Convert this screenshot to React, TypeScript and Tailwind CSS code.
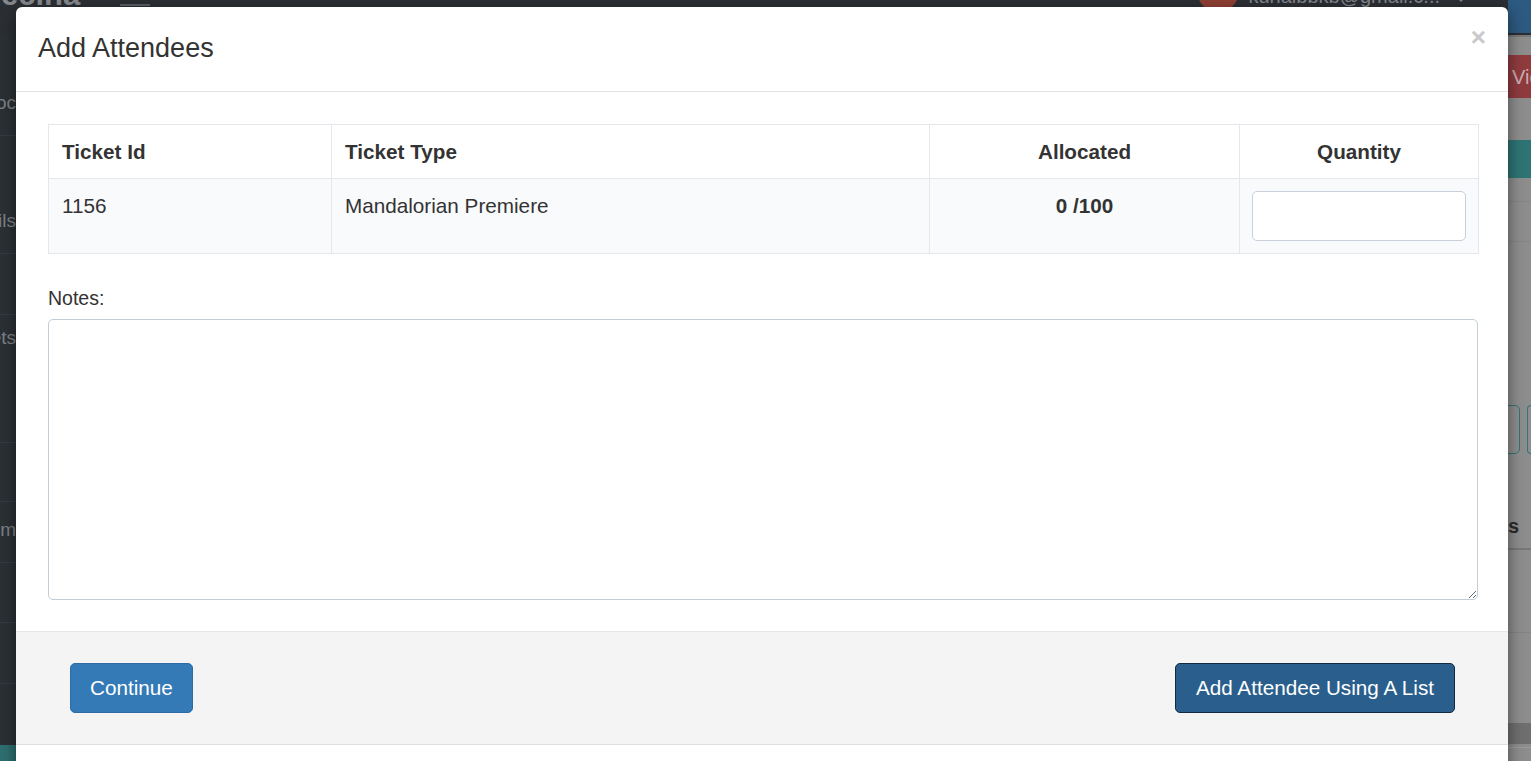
const sideRows = [
  { h: 'h-[101px]', label: 'Doc', border: true },
  { h: 'h-[60px]', label: '', border: false },
  { h: 'h-[58px]', label: 'Details', border: true },
  { h: 'h-[61px]', label: '', border: true },
  { h: 'h-[55px]', label: 'Tickets', border: false },
  { h: 'h-[73px]', label: '', border: true },
  { h: 'h-[59px]', label: '', border: true },
  { h: 'h-[61px]', label: 'Form', border: true },
  { h: 'h-[60px]', label: '', border: true },
  { h: 'h-[61px]', label: '', border: true },
  { h: 'h-[61px]', label: '', border: false },
]

function Backdrop() {
  return (
    <div className="absolute inset-0 flex flex-col bg-[#8d8d8d]">
      {/* navbar, dimmed by the modal backdrop */}
      <div className="h-[35px] shrink-0 flex items-start bg-[#2b2f34]">
        <div className="w-[120px] shrink-0 overflow-hidden">
          <span className="block -ml-[18px] -mt-[23px] whitespace-nowrap text-[31px] font-bold leading-[36px] text-[#85888c]">
            Vecina
          </span>
        </div>
        <div className="mt-[4px] w-[30px] h-[2px] bg-[#5b5f65]" />
        <div className="flex-1" />
        <div className="-mt-[30px] mr-[9px] w-[42px] h-[42px] rounded-full bg-[#8e3f33]" />
        <span className="-mt-[16px] text-[20px] leading-[24px] text-[#80848a]">kunalbbkb@gmail.c...</span>
        <svg className="-mt-[4px] ml-[14px] mr-[40px]" width="14" height="8" viewBox="0 0 14 8">
          <path d="M1 0 L7 6 L13 0 Z" fill="#80848a" />
        </svg>
        <div className="w-[23px] h-[33px] bg-[#2c5a80]" />
      </div>

      <div className="flex-1 flex">
        <aside className="w-[16px] shrink-0 flex flex-col bg-[#2b3035] overflow-hidden">
          {sideRows.map((r, i) => (
            <div
              key={i}
              className={`${r.h} shrink-0 flex items-end pb-[18px] justify-end whitespace-nowrap text-[19px] text-[#7c8085] ${
                r.border ? 'border-b border-[#363b41]' : ''
              }`}
            >
              {r.label}
            </div>
          ))}
          <div className="flex-1 bg-[#2e6f70]" />
        </aside>

        <div className="flex-1 flex flex-col border-t-2 border-[#787878]">
          <div className="h-[18px]" />
          <div className="h-[43px] flex justify-end">
            <div className="w-[23px] overflow-hidden bg-[#8f3b3e] flex items-center">
              <span className="pl-[4px] text-[20px] text-[#c9aeb0] whitespace-nowrap">View</span>
            </div>
          </div>
          <div className="h-[42px]" />
          <div className="h-[38px] bg-[#2e7474]" />
          <div className="h-[24px] border-b border-[#858585]" />
          <div className="h-[40px] border-b border-[#858585]" />
          <div className="h-[163px]" />
          <div className="h-[49px] flex justify-end gap-[7px]">
            <div className="w-[40px] rounded-[5px] border border-[#2f7676]" />
            <div className="w-[4px] rounded-l-[5px] border border-r-0 border-[#2f7676]" />
          </div>
          <div className="h-[60px]" />
          <div className="h-[36px] flex items-start justify-end border-b-2 border-[#787878]">
            <span className="w-[23px] overflow-hidden whitespace-nowrap text-[20px] font-bold leading-[24px] text-[#2b2b2b]">s</span>
          </div>
          <div className="h-[83px] border-b border-[#838383]" />
          <div className="h-[90px]" />
          <div className="h-[21px] bg-[#6f6f6f]" />
          <div className="h-[4px] border-b border-[#9a9a9a]" />
        </div>
      </div>
    </div>
  )
}

export default function App() {
  return (
    <div className="relative w-full h-[761px] overflow-hidden font-['Liberation_Sans',Arial,sans-serif] text-[#333]">
      <Backdrop />

      <div className="absolute left-[16px] top-[7px] w-[1492px] h-[800px] bg-white rounded-t-[6px] shadow-[0_5px_15px_rgba(0,0,0,0.5)] flex flex-col">
        <header className="h-[85px] shrink-0 flex items-start justify-between px-[22px] border-b border-[#e2e2e2]">
          <h4 className="mt-[26px] text-[27px] leading-[30px] text-[#333]">Add Attendees</h4>
          <button className="mt-[15px] text-[26px] font-bold leading-[30px] text-[#c9c9c9]">×</button>
        </header>

        <div className="pl-[32px] pr-[30px] pt-[32px] pb-[31px]">
          <table className="w-full table-fixed border-collapse text-[20.7px] leading-[29.6px]">
            <thead>
              <tr className="h-[54px]">
                <th className="w-[283px] border border-[#e4e7eb] px-[13px] text-left font-bold">Ticket Id</th>
                <th className="w-[598px] border border-[#e4e7eb] px-[13px] text-left font-bold">Ticket Type</th>
                <th className="w-[310px] border border-[#e4e7eb] px-[13px] text-center font-bold">Allocated</th>
                <th className="w-[239px] border border-[#e4e7eb] px-[13px] text-center font-bold">Quantity</th>
              </tr>
            </thead>
            <tbody>
              <tr className="bg-[#f9fafc]">
                <td className="align-top border border-[#e4e7eb] px-[13px] py-[12px]">1156</td>
                <td className="align-top border border-[#e4e7eb] px-[13px] py-[12px]">Mandalorian Premiere</td>
                <td className="align-top border border-[#e4e7eb] px-[13px] py-[12px] text-center font-bold">0 /100</td>
                <td className="align-top border border-[#e4e7eb] px-[12px] py-[12px]">
                  <input
                    type="text"
                    className="block w-full h-[50px] rounded-[5px] border border-[#c8d0db] bg-white px-[12px] outline-none"
                  />
                </td>
              </tr>
            </tbody>
          </table>

          <label className="block mt-[30px] mb-[7px] text-[19.5px] leading-[28px]">Notes:</label>
          <textarea className="block w-full h-[281px] rounded-[5px] border border-[#c2cdd8] bg-white px-[12px] py-[8px] outline-none" />
        </div>

        <footer className="h-[114px] shrink-0 flex items-start justify-between pl-[54px] pr-[53px] pt-[31px] bg-[#f4f4f4] border-t border-[#e6e6e6] border-b border-b-[#dedede]">
          <button className="h-[50px] px-[19px] rounded-[5px] border border-[#2e6da4] bg-[#337ab7] text-[20.7px] text-white">
            Continue
          </button>
          <button className="h-[50px] px-[20px] rounded-[5px] border border-[#122b40] bg-[#2a5f8d] text-[20.7px] text-white">
            Add Attendee Using A List
          </button>
        </footer>
        <div className="flex-1 bg-white" />
      </div>
    </div>
  )
}
